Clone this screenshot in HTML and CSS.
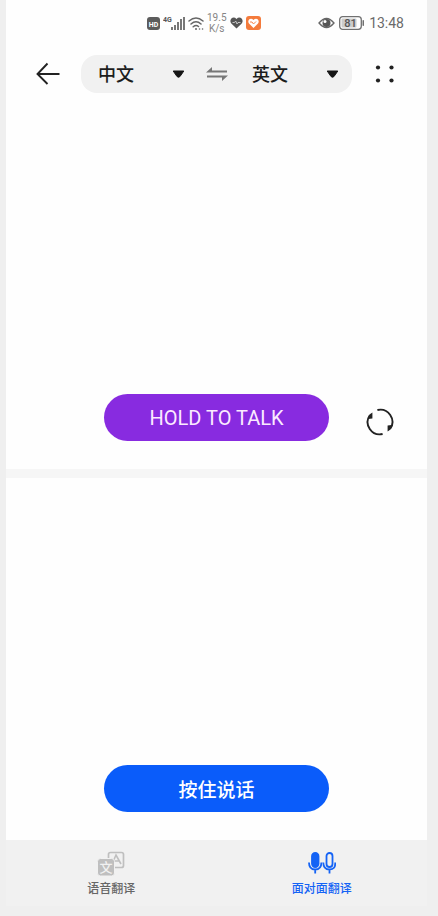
FILE: index.html
```html
<!DOCTYPE html>
<html lang="zh-CN">
<head>
<meta charset="utf-8">
<meta name="viewport" content="width=device-width, initial-scale=1">
<title>面对面翻译</title>
<link rel="stylesheet" href="styles.css">
</head>
<body>
<div class="app">
  <main class="panels">
    <section class="panel">
      <div class="status">
        <div class="status-group">
          <svg width="13" height="13" viewBox="0 0 13 13"><rect width="13" height="13" rx="3" fill="#5c5c5c"/><text class="hd-text" x="6.5" y="9.5" text-anchor="middle">HD</text></svg>
          <svg width="22" height="15" viewBox="0 0 22 15"><text class="net-text" x="0" y="6">4G</text><g fill="#777"><rect x="8" y="11" width="2" height="3"/><rect x="11" y="9" width="2" height="5"/><rect x="14" y="6" width="2" height="8"/><rect x="17" y="3" width="2" height="11"/><rect x="20" y="1" width="2" height="13"/></g></svg>
          <svg width="16" height="15" viewBox="0 0 16 15" fill="none" stroke="#666" stroke-width="1.5" stroke-linecap="round"><path d="M1 5Q8-1 15 5M3 8Q8 3.5 13 8M5.2 10.8Q8 8.4 10.5 10.5"/><circle cx="8" cy="13" r="1" fill="#666" stroke="none"/><path d="M11.5 13h.1M14.5 13h.1"/></svg>
          <span class="speed">19.5<br>K/s</span>
          <svg width="13" height="12" viewBox="0 0 13 12"><path d="M6.5 11.6L1.3 6.5C-1.6 3 3-1.8 6.5 1.9C10-1.8 14.6 3 11.7 6.5Z" fill="#555"/><path d="M2.5 5.5h2l1.2-1.5 1.3 3 1-1.5h2.5" fill="none" stroke="#ddd" stroke-width=".8"/></svg>
          <svg width="15" height="14" viewBox="0 0 15 14"><rect width="15" height="14" rx="3" fill="#f47b3c"/><path d="M7.5 12L3 7.5C.7 4.5 4.5 1 7.5 4C10.5 1 14.3 4.5 12 7.5Z" fill="#fff"/><path d="M4 6l2 0 1.5 2 2.5-2.5" fill="none" stroke="#f47b3c" stroke-width=".9"/></svg>
        </div>
        <div class="status-group">
          <svg width="17" height="12" viewBox="0 0 17 12"><path d="M1 6Q8.5-3 16 6Q8.5 15 1 6Z" fill="#fff" stroke="#666" stroke-width="1.3"/><circle cx="8.5" cy="6" r="4" fill="#555"/><circle cx="7" cy="4.5" r="1.5" fill="#fff"/></svg>
          <svg width="26" height="14" viewBox="0 0 26 14"><rect x=".7" y=".7" width="21.6" height="12.6" rx="3" fill="#fff" stroke="#707070" stroke-width="1.3"/><rect x="2.5" y="2.5" width="15" height="9" rx="1" fill="#ccc"/><rect x="23.5" y="4" width="1.5" height="6" rx=".7" fill="#707070"/><text class="battery-text" x="11.5" y="11" text-anchor="middle">81</text></svg>
          <time class="clock">13:48</time>
        </div>
      </div>
      <header class="header">
        <button class="icon-button" type="button" aria-label="返回"><svg width="24" height="24" viewBox="0 0 24 24" fill="none" stroke="#222" stroke-width="1.9"><path d="M11.5 1.5L1.5 12L11.5 22M1.5 12H23.5"/></svg></button>
        <div class="languages">
          <div class="language">
            <select aria-label="源语言"><option>中文</option><option>英文</option></select>
            <svg class="caret" width="13" height="8" viewBox="0 0 13 8"><path d="M1.2 1h10.600L8 6.500Q6.500 8 5 6.500Z" fill="#151515" stroke="#151515" stroke-linejoin="round"/></svg>
          </div>
          <button class="icon-button" type="button" aria-label="交换语言"><svg width="22" height="16" viewBox="0 0 22 16" fill="#777"><path d="M0 6.5L6 1V4.5H21V6.5ZM22 9.5L16 15V11.5H1V9.5Z"/></svg></button>
          <div class="language">
            <select aria-label="目标语言"><option>英文</option><option>中文</option></select>
            <svg class="caret" width="13" height="8" viewBox="0 0 13 8"><path d="M1.2 1h10.600L8 6.500Q6.500 8 5 6.500Z" fill="#151515" stroke="#151515" stroke-linejoin="round"/></svg>
          </div>
        </div>
        <button class="icon-button" type="button" aria-label="更多"><svg width="20" height="18" viewBox="0 0 20 18" fill="#222"><circle cx="3" cy="2.5" r="2.1"/><circle cx="16.5" cy="2.5" r="2.1"/><circle cx="3" cy="15.5" r="2.1"/><circle cx="16.5" cy="15.5" r="2.1"/></svg></button>
      </header>
      <div class="actions">
        <button class="talk talk-purple" type="button">HOLD TO TALK</button>
        <button class="icon-button rotate" type="button" aria-label="旋转"><svg width="28" height="28" viewBox="0 0 28 28" fill="none" stroke="#222" stroke-width="1.9"><path d="M11.4 2A12.200 12.200 0 0 1 24.200 20.800M16.600 26A12.200 12.200 0 0 1 3.800 7.200"/><path d="M26 17L21.600 17.500V23.500L24.500 21.500Z M2 11L6.400 10.500V4.500L3.500 6.500Z" fill="#222" stroke="none"/></svg></button>
      </div>
    </section>
    <section class="panel">
      <div class="actions">
        <button class="talk talk-blue" type="button">按住说话</button>
      </div>
    </section>
  </main>
  <nav class="tabs">
    <a class="tab" href="#voice">
      <svg width="28" height="26" viewBox="0 0 28 26"><rect x="11.5" y="1.500" width="15" height="15" rx="2" fill="#f1f1f1" stroke="#bfbfbf" stroke-width="1.7"/><path d="M15 13L19 4L24 13M17 10H22.500" fill="none" stroke="#bfbfbf" stroke-width="1.600"/><rect x=".5" y="7.500" width="17" height="17.500" rx="3" fill="#bfbfbf" stroke="#f1f1f1"/><text class="glyph-wen" x="9" y="21" text-anchor="middle">文</text></svg>
      <span>语音翻译</span>
    </a>
    <a class="tab tab-active" href="#face" aria-current="page">
      <svg width="28" height="26" viewBox="0 0 28 26" fill="none" stroke="#1463f5" stroke-width="1.8"><rect x="4" y="2" width="6.5" height="14" rx="3.25" fill="#1463f5"/><path d="M1 11.5Q1 18.5 7.2 18.5T13.4 11.5M7.2 18.5V22.5"/><rect x="18.5" y="2" width="6" height="14" rx="3"/><path d="M15.3 11.5Q15.3 18.5 21.5 18.5T27.2 11.5M21.5 18.5V22.5"/></svg>
      <span>面对面翻译</span>
    </a>
  </nav>
</div>
</body>
</html>
```
FILE: styles.css
```css
* {
  box-sizing: border-box;
}

body {
  margin: 0;
  padding: 0 11px 10px 6px;
  background: #efefef;
  color: #1c1c1c;
  font-family: Roboto, "Noto Sans CJK SC", sans-serif;
}

button,
select {
  margin: 0;
  padding: 0;
  border: 0;
  background: none;
  color: inherit;
  font: inherit;
}

svg {
  display: block;
  flex: none;
}

.app {
  display: flex;
  flex-direction: column;
  min-height: calc(100vh - 10px);
  background: #fefefe;
}

.panels {
  flex: 1;
  display: flex;
  flex-direction: column;
}

.panel {
  flex: 1 0 371px;
  display: flex;
  flex-direction: column;
}

.panel:first-child {
  flex-basis: 469px;
}

.panel + .panel {
  border-top: 9px solid #f6f6f6;
}

.status {
  display: flex;
  justify-content: space-between;
  height: 46px;
  padding: 0 23px 0 141px;
}

.status-group {
  display: flex;
  align-items: center;
  gap: 4px;
}

.status-group:first-child {
  gap: 3px;
}

.hd-text,
.net-text {
  font-size: 7px;
  font-weight: 700;
  fill: #555;
}

.hd-text {
  fill: #fff;
}

.battery-text {
  font-size: 11px;
  font-weight: 500;
  fill: #555;
}

.speed {
  color: #858585;
  font-size: 10px;
  line-height: 11px;
  text-align: center;
}

.clock {
  color: #6a6a6a;
  font-size: 14px;
}

.header {
  display: flex;
  align-items: center;
  gap: 21px;
  padding: 9px 32px 0 30px;
}

.icon-button {
  display: flex;
  align-items: center;
  cursor: pointer;
}

.languages {
  flex: 1;
  display: flex;
  align-items: center;
  gap: 21px;
  height: 38px;
  margin-right: 2px;
  padding: 0 13px 0 17px;
  border-radius: 16px;
  background: #f1f1f1;
}

.language {
  flex: 0 1 87px;
  display: grid;
  align-items: center;
}

.language:last-child {
  margin-left: auto;
}

.language select,
.caret {
  grid-area: 1 / 1;
}

.language select {
  width: 100%;
  padding-top: 2px;
  appearance: none;
  font-size: 18px;
  font-weight: 500;
  line-height: 28px;
}

.caret {
  justify-self: end;
  pointer-events: none;
}

.actions {
  display: grid;
  grid-template-columns: 1fr 225px 1fr;
  column-gap: 37px;
  align-items: end;
  margin-top: auto;
  padding-bottom: 28px;
}

.talk {
  grid-column: 2;
  height: 47px;
  border-radius: 24px;
  color: #fff;
  font-size: 19px;
  cursor: pointer;
}

.talk-purple {
  background: #882be0;
  color: #fbeaff;
  font-size: 20px;
}

.talk-blue {
  background: #0a5cfa;
  font-weight: 500;
}

.rotate {
  height: 38px;
}

.tabs {
  display: grid;
  grid-template-columns: 1fr 1fr;
  height: 66px;
  background: #f1f1f1;
}

.tab {
  display: flex;
  flex-direction: column;
  align-items: center;
  gap: 3px;
  padding-top: 11px;
  color: #666;
  font-size: 12px;
  font-weight: 500;
  line-height: 18px;
  text-decoration: none;
}

.tab-active {
  color: #1463f5;
}

.glyph-wen {
  font-size: 13px;
  font-weight: 500;
  fill: #f1f1f1;
}
```
